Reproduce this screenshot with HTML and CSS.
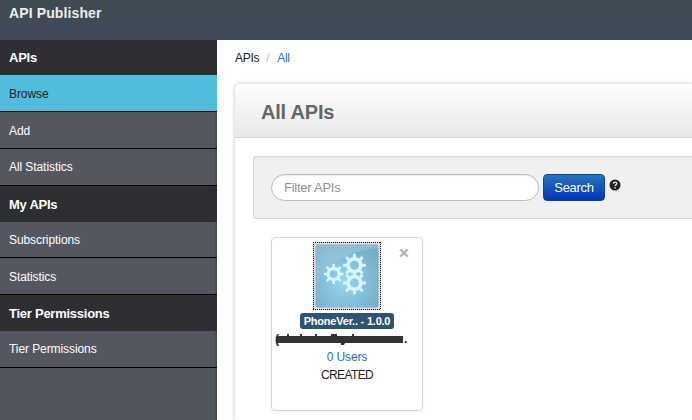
FILE: index.html
```html
<!DOCTYPE html>
<html lang="en">
<head>
<meta charset="utf-8">
<title>API Publisher</title>
<link rel="stylesheet" href="styles.css">
</head>
<body>
<header class="topbar">API Publisher</header>
<div class="layout">
  <nav class="sidebar">
    <h2 class="group first">APIs</h2>
    <a class="item active">Browse</a>
    <a class="item">Add</a>
    <a class="item raised">All Statistics</a>
    <h2 class="group">My APIs</h2>
    <a class="item short">Subscriptions</a>
    <a class="item">Statistics</a>
    <h2 class="group">Tier Permissions</h2>
    <a class="item raised">Tier Permissions</a>
  </nav>
  <main class="main">
    <div class="crumbs"><span>APIs</span><span class="sep">/</span><a>All</a></div>
    <section class="panel">
      <h1 class="title">All APIs</h1>
      <div class="content">
        <form class="search">
          <input class="field" type="text" placeholder="Filter APIs">
          <button class="btn" type="button">Search</button>
          <svg class="help" width="12" height="12" viewBox="0 0 12 12"><circle cx="6" cy="6" r="5.5" fill="#222"/><path d="M4.3 4.6C4.4 2.7 7.9 2.7 7.8 4.7C7.7 5.9 6.1 5.8 6.1 7.1M6.1 8.1V9.4" fill="none" stroke="#ddd" stroke-width="1.4"/></svg>
        </form>
        <article class="card">
          <svg class="close" width="10" height="10" viewBox="0 0 10 10"><path d="M1.3 1.3L8.7 8.7M8.7 1.3L1.3 8.7" stroke="#bbb" stroke-width="2.5"/></svg>
          <svg class="thumb" width="70" height="70" viewBox="0 0 70 70">
            <defs>
              <radialGradient id="glow" cx=".45" cy=".6" r=".65"><stop offset="0" stop-color="#98d5ef"/><stop offset=".55" stop-color="#84bfda"/><stop offset="1" stop-color="#76adc7"/></radialGradient>
              <linearGradient id="shine" x1="0" y1="0" x2="0" y2="1"><stop offset="0" stop-color="#fff" stop-opacity=".16"/><stop offset="1" stop-color="#fff" stop-opacity=".04"/></linearGradient>
              <g id="gear"><circle r="6.4" fill="none" stroke="#d5f6fe" stroke-width="3.8"/><path d="M0-11.5V-7M0 11.5V7M-11.5 0H-7M11.5 0H7M-8.2-8.2L-5-5M8.2 8.2L5 5M-8.2 8.2L-5 5M8.2-8.2L5-5" stroke="#d5f6fe" stroke-width="3"/></g>
            </defs>
            <rect x="1" y="1" width="68" height="68" fill="#dcdcda"/>
            <path d="M1 1.5H69M1 68.5H69M1.5 1V69M68.5 1V69" fill="none" stroke="#111" stroke-dasharray="1 1"/>
            <rect x="3.5" y="3.5" width="63" height="63" rx="2" fill="url(#glow)"/>
            <path d="M3.5 45C10 27 34 9 66.5 7V5.5Q66.5 3.5 64.5 3.5H5.5Q3.5 3.5 3.5 5.5Z" fill="url(#shine)"/>
            <use href="#gear" transform="translate(21.7 33) scale(.86)"/>
            <use href="#gear" transform="translate(42.4 24.3)"/>
            <use href="#gear" transform="translate(42.4 42)"/>
          </svg>
          <div class="badge">PhoneVer.. - 1.0.0</div>
          <div class="owner"><span>(</span><svg class="mask" width="126" height="14" viewBox="0 0 126 14"><path d="M10 2h2v2h-2zM23 2h2v2h-2zM38 2h2v2h-2zM54 2h6v2h-6zM75 2h2v2h-2zM64 11h4l-1 2h-3z" fill="#333"/><path d="M0 4H126V11H0Z" fill="#333"/></svg><span>.</span></div>
          <a class="users">0 Users</a>
          <div class="state">CREATED</div>
        </article>
      </div>
    </section>
  </main>
</div>
</body>
</html>
```
FILE: styles.css
```css
* { box-sizing: border-box; }
body { margin: 0; width: 692px; height: 420px; overflow: hidden; background: #fff; font: 12px/18px "Liberation Sans", Arial, sans-serif; color: #222; }
.topbar { height: 40px; padding: 3px 9px; background: linear-gradient(#3f4a55, #404b57); color: #eee; font-size: 14px; font-weight: bold; line-height: 20px; letter-spacing: .12px; }
.layout { display: flex; height: 380px; }
.sidebar { width: 217px; background: #51565e; box-shadow: inset -2px 0 1px rgba(0,0,0,.12); }
.group { margin: 0; height: 36px; padding-left: 9px; background: #2d2e32; color: #fff; font-size: 13px; line-height: 37px; letter-spacing: -.25px; }
.first { height: 35px; line-height: 35px; }
.item { display: block; height: 37px; padding-left: 9px; border-bottom: 1px solid #000; background: #54575f; color: #fff; line-height: 38px; letter-spacing: -.08px; box-shadow: inset -2px 0 1px rgba(0,0,0,.12); }
.short { height: 36px; line-height: 36px; }
.raised { line-height: 36px; }
.active { background: #50bddd; color: #222; box-shadow: none; }
.main { display: flex; flex-direction: column; flex: 1; min-width: 0; padding: 9px 0 0 18px; }
.crumbs { display: flex; height: 18px; letter-spacing: -.3px; }
.sep { color: #bbb; padding: 0 8px 0 7px; }
a { color: #2a6fc4; }
.panel { flex: 1; min-height: 0; margin-top: 17px; border-radius: 5px 0 0; box-shadow: 0 0 4px rgba(0,0,0,.25); background: #fff; }
.title { margin: 0; height: 54px; padding-left: 26px; border-radius: 5px 0 0; border-bottom: 1px solid #d2d2d2; background: linear-gradient(#fefefe, #e8e8e8); font-size: 20px; line-height: 57px; letter-spacing: -.2px; color: #666; }
.content { padding: 18px 0 0 18px; }
.search { display: flex; align-items: flex-start; height: 63px; padding: 17px; border: 1px solid #dadada; border-right: 0; border-radius: 3px 0 0 3px; background: #f0f0f0; box-shadow: inset 0 1px 1px rgba(0,0,0,.05); }
.field { width: 268px; height: 27px; padding: 0 12px; border: 1px solid #bbb; border-radius: 14px; background: #fff; font: 13px "Liberation Sans", Arial, sans-serif; letter-spacing: -.25px; box-shadow: inset 0 1px 1px rgba(0,0,0,.08); }
.field::placeholder { color: #909090; }
.btn { width: 62px; height: 27px; margin-left: 4px; padding: 0; border: 1px solid #0b4799; border-radius: 4px; background: linear-gradient(#2674bc, #0036bd); color: #fff; font: 13px "Liberation Sans", Arial, sans-serif; letter-spacing: -.3px; }
.help { margin: 5px 0 0 4px; }
.card { position: relative; display: flex; flex-direction: column; align-items: center; width: 152px; height: 174px; margin: 18px 0 0 18px; padding-top: 3px; border: 1px solid #d5d5d5; border-radius: 4px; box-shadow: 0 1px 3px rgba(0,0,0,.06); }
.close { position: absolute; right: 13px; top: 10px; }
.thumb { display: block; }
.badge { height: 16px; margin-top: 2px; padding: 0 4px; border-radius: 3px; background: #30536f; color: #fff; font-size: 11px; font-weight: bold; line-height: 16px; letter-spacing: -.22px; }
.owner { display: flex; align-self: flex-start; height: 18px; margin-left: 3px; font-weight: bold; }
.owner span { padding-top: 1px; }
.mask { margin: 3px 1px 0 -2px; }
.users, .state { height: 18px; letter-spacing: -.15px; }
.users { margin-top: 1px; }
.state { letter-spacing: -.6px; }
```
